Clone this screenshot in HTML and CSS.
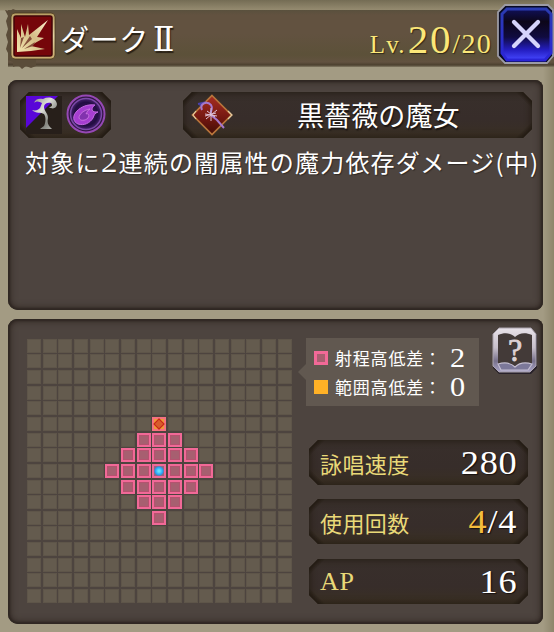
FILE: index.html
```html
<!DOCTYPE html>
<html lang="ja">
<head>
    <meta charset="UTF-8">
    <meta name="viewport" content="width=device-width, initial-scale=1.0">
    <title>ダークⅡ</title>
    <link rel="stylesheet" href="styles.css">
</head>
<body>
    <div class="header">
        <svg class="torn" width="34" height="62" viewBox="0 0 34 62">
            <path d="M34 1H20l-4 1-5-2-3 2-5-1 3 6-2 5 2 8-2 6 2 7-2 7 3 6-1 5 5 2 0 5 5-2 4 4 4-3 5 2 5-2z" fill="#5a4c39"/>
        </svg>
        <svg class="skill-icon" width="46" height="48" viewBox="0 0 46 48">
            <defs>
                <linearGradient id="gold" x1="0" y1="0" x2="0" y2="1">
                    <stop offset="0" stop-color="#b79d62"/>
                    <stop offset=".5" stop-color="#e3d2a0"/>
                    <stop offset="1" stop-color="#c6a86c"/>
                </linearGradient>
                <linearGradient id="claw" x1="0" y1="1" x2="1" y2="0">
                    <stop offset="0" stop-color="#f4e5ae"/>
                    <stop offset=".5" stop-color="#d4bd87"/>
                    <stop offset="1" stop-color="#fff5d0"/>
                </linearGradient>
            </defs>
            <rect x="1" y="1" width="44" height="46" rx="4" fill="url(#gold)" stroke="#4a3820" stroke-width=".8"/>
            <rect x="4" y="4" width="38" height="40" rx="2" fill="#75060a" stroke="#420508" stroke-width="1.500"/>
            <path d="M7 40V17l4 9V12l4 13 3-13 1 11L38 8 27 25l7 1-9 5-4 3 14 3-14 2z" fill="url(#claw)"/>
            <path d="M11 26l-1 10 4-11zM20 24l-8 12 10-9zM25 30l-11 7 9-3z" fill="#86503a"/>
        </svg>
        <h1>ダーク<span class="roman">Ⅱ</span></h1>
        <div class="level"><span class="lv">Lv.</span><span class="now">20</span><span class="max">/20</span></div>
        <svg class="close" width="58" height="64" viewBox="0 0 58 64">
            <defs>
                <linearGradient id="blue" x1="0" y1="0" x2="0" y2="1">
                    <stop offset="0" stop-color="#101058"/>
                    <stop offset=".25" stop-color="#0c0619"/>
                    <stop offset=".55" stop-color="#100b40"/>
                    <stop offset=".8" stop-color="#241dc0"/>
                    <stop offset="1" stop-color="#4547ff"/>
                </linearGradient>
                <linearGradient id="rim" x1="0" y1="0" x2="0" y2="1">
                    <stop offset="0" stop-color="#2a3bb0"/>
                    <stop offset="1" stop-color="#2b25d8"/>
                </linearGradient>
            </defs>
            <path d="M9 2h43l5 5v46l-6 7H9l-7-7V9z" fill="#080a22" stroke="#9c9ba5" stroke-width="1.800"/>
            <path d="M11 6h39l5 5v39l-6 7H11l-5-7V11z" fill="url(#blue)" stroke="url(#rim)" stroke-width="3"/>
            <path d="M18 19l24 24M42 19L18 43" stroke="#d6d4fb" stroke-width="4.300" stroke-linecap="round"/>
        </svg>
    </div>

    <div class="panel description">
        <div class="tags">
            <div class="slot types">
                <svg width="36" height="38" viewBox="0 0 36 38">
                    <defs>
                        <linearGradient id="bone" x1="0" y1="0" x2="1" y2="1">
                            <stop offset="0" stop-color="#8c8c84"/>
                            <stop offset=".4" stop-color="#dedfd9"/>
                            <stop offset=".7" stop-color="#858680"/>
                            <stop offset="1" stop-color="#c9cac5"/>
                        </linearGradient>
                    </defs>
                    <path d="M0 0h36v38H0z" fill="#271f1a"/>
                    <path d="M0 0h32L0 32z" fill="#5906d8"/>
                    <path d="M8 7c1-4 5-5 9-4 6-3 13-1 14 5 0 4-4 6-8 3 3 0 4-2 2-4-4-1-7 1-7 4 0 4 4 6 4 11-1 4 0 7 2 9l2 2h-12l4-3c2-4 2-9 0-12-3-2-8 0-12-4 4 1 6 0 8-2l2-5c-3-2-6-2-8 0z" fill="url(#bone)"/>
                </svg>
                <svg width="40" height="40" viewBox="0 0 40 40">
                    <defs>
                        <radialGradient id="orb">
                            <stop offset="0" stop-color="#4c176f"/>
                            <stop offset=".75" stop-color="#220d42"/>
                            <stop offset="1" stop-color="#47236e"/>
                        </radialGradient>
                    </defs>
                    <circle cx="20" cy="20" r="18.500" fill="#321545" stroke="#9548b4" stroke-width="2"/>
                    <circle cx="20" cy="20" r="15.500" fill="url(#orb)" stroke="#7b49a7" stroke-width="1.500"/>
                    <path d="M29 11c-8-1-14 2-18 6-5 5-4 11 1 13 6 2 12-1 15-6 1-3 2-5 5-6-3 0-5 0-6-2 0-2 1-4 3-5z" fill="#a63ed0" stroke="#c36be0"/>
                    <path d="M24 15c-6 1-11 5-11 9 1 3 6 3 9 0 2-3 0-5-2-4 1-2 2-4 4-5z" fill="#8232ae" stroke="#d07be4" stroke-width=".8"/>
                </svg>
            </div>
            <div class="slot job">
                <svg width="42" height="42" viewBox="0 0 42 42">
                    <defs>
                        <linearGradient id="ruby" x1="0" y1="0" x2="0" y2="1">
                            <stop offset="0" stop-color="#a72d22"/>
                            <stop offset=".6" stop-color="#711710"/>
                            <stop offset="1" stop-color="#420d06"/>
                        </linearGradient>
                    </defs>
                    <path d="M21 1.500L40.500 21 21 40.500 1.500 21z" fill="url(#ruby)" stroke="#b8753b" stroke-width="1.700"/>
                    <path d="M5 17l-3 4 3 4M37 17l4 4-4 4" fill="none" stroke="#e3caa1" stroke-width="1.200"/>
                    <path d="M7 10l5-1-3 3" fill="none" stroke="#4941ae" stroke-width="2"/>
                    <path d="M11 16c-3-7 5-9 9-5 3 4-2 7 0 10l6 5 7 8" fill="none" stroke="#a577cc" stroke-width="2"/>
                    <path d="M14 22l11-3M16 17l8 6M20 14v13M15 25l11-9M14 20l12 2" stroke="#dfc2d6" stroke-width="1"/>
                </svg>
                <h2>黒薔薇の魔女</h2>
            </div>
        </div>
        <p class="effect">対象に<span class="digit">2</span>連続の闇属性の魔力依存ダメージ(中)</p>
    </div>

    <div class="panel range">
        <div class="grid" id="grid"></div>
        <div class="side">
            <div class="top">
                <div class="legend">
                    <div class="row"><i class="key pink"></i><span>射程高低差：</span><b>2</b></div>
                    <div class="row"><i class="key orange"></i><span>範囲高低差：</span><b>0</b></div>
                </div>
                <svg class="help" width="46" height="49" viewBox="0 0 46 49">
                    <defs>
                        <linearGradient id="silver" x1="0" y1="0" x2="0" y2="1">
                            <stop offset="0" stop-color="#e8e2e8"/>
                            <stop offset=".45" stop-color="#c7bfca"/>
                            <stop offset=".75" stop-color="#77708a"/>
                            <stop offset="1" stop-color="#aaa5c9"/>
                        </linearGradient>
                    </defs>
                    <path d="M7 2h33l5 6v33l-6 6H7l-6-6V8z" fill="#29222b"/>
                    <path d="M7 1h32l5 6v32l-6 6H7l-6-6V7z" fill="url(#silver)" stroke="#aaa2ac"/>
                    <path d="M6 8c7-3 13-2 17 2 4-4 10-5 17-2v30c-7-2-13-1-17 3-4-4-10-5-17-3z" fill="#433a38"/>
                    <path d="M6 37c7-2 13-1 17 3 4-4 10-5 17-3l-4 6H9z" fill="#7c7899" stroke="#c4bed1" stroke-width="1.200"/>
                    <text x="23" y="34" text-anchor="middle" class="question">?</text>
                </svg>
            </div>
            <div class="slot stat"><span class="label">詠唱速度</span><span class="value">280</span></div>
            <div class="slot stat"><span class="label">使用回数</span><span class="value"><em>4</em>/4</span></div>
            <div class="slot stat"><span class="label latin">AP</span><span class="value">16</span></div>
        </div>
    </div>
    <script src="script.js"></script>
</body>
</html>
```
FILE: styles.css
```css
* {
    box-sizing: border-box;
}
body {
    margin: 0;
    width: 554px;
    height: 632px;
    padding-top: 10px;
    overflow: hidden;
    color: #fff;
    font-family: "Liberation Serif", "Noto Sans CJK JP", serif;
    background: linear-gradient(to right, transparent 543px, #8d856b 554px),
        linear-gradient(#746c54, #958b70 10px, #a39b83 11px);
}
h1, h2, p {
    margin: 0;
    font-weight: 400;
}
svg {
    display: block;
    flex: none;
}
.header {
    position: relative;
    display: flex;
    height: 57px;
    margin-left: 8px;
    padding-left: 2px;
    background: linear-gradient(#59503d, #625240 5px, #625240 24px, #5c5139 45px, #625240 52px, #4c402f 55px, #847b65);
}
.torn {
    position: absolute;
    left: -6px;
    top: -1px;
}
.skill-icon {
    position: relative;
    margin-top: 2px;
}
h1 {
    margin-left: 4px;
    font: 29px/56px "Noto Sans CJK JP", sans-serif;
    letter-spacing: .6px;
    white-space: nowrap;
    text-shadow: 1px 2px 1px #292116;
}
.roman {
    display: inline-block;
    margin-left: 4px;
    font: 33px/40px "DejaVu Serif", serif;
    transform: scaleX(.95);
    transform-origin: 0 0;
}
.level {
    display: flex;
    align-items: baseline;
    margin-left: auto;
    margin-right: 4px;
    color: #fbe778;
    line-height: 58px;
    text-shadow: 1px 1px 1px #302818;
}
.lv {
    font-size: 25px;
    letter-spacing: 1.2px;
    margin-right: 2px;
}
.now {
    font-size: 41px;
    letter-spacing: 1.8px;
}
.max {
    font-size: 28px;
    letter-spacing: 1.3px;
}
.close {
    position: relative;
    margin-top: -7px;
}
.panel {
    position: relative;
    width: 535px;
    margin-left: 8px;
    background: #4d443f;
    border-radius: 9px 8px 8px 10px;
    box-shadow: inset 0 0 2px 2px #2f2722, inset 0 0 6px 3px #382e29;
}
.description {
    height: 230px;
    margin-top: 13px;
    padding: 12px 0 0 12px;
}
.tags {
    display: flex;
    gap: 72px;
}
.slot {
    height: 46px;
    display: flex;
    align-items: center;
    clip-path: polygon(9px 0, calc(100% - 9px) 0, 100% 9px, 100% calc(100% - 9px), calc(100% - 9px) 100%, 9px 100%, 0 calc(100% - 9px), 0 9px);
    background: linear-gradient(135deg, #241c14 7px, transparent 12px),
        linear-gradient(225deg, #241c14 7px, transparent 12px),
        linear-gradient(45deg, #241c14 7px, transparent 12px),
        linear-gradient(315deg, #241c14 7px, transparent 12px),
        linear-gradient(#382f2b, #372d2a 60%, #392f23);
    box-shadow: inset 0 0 6px 1px #261e15;
}
.types {
    width: 91px;
    gap: 4px;
    padding-left: 6px;
}
.types svg:last-child {
    margin-top: -3px;
}
.job {
    width: 349px;
    padding-left: 8px;
}
h2 {
    margin-left: 64px;
    font: 27px/46px "Noto Sans CJK JP", sans-serif;
    letter-spacing: .1px;
    white-space: nowrap;
    text-shadow: 1px 2px 1px #1c1613;
}
.effect {
    margin: 6px 0 0 5px;
    font: 24px/36px "Noto Sans CJK JP", sans-serif;
    letter-spacing: 1.2px;
    white-space: nowrap;
    text-shadow: 1px 1px 1px #302a26;
}
.digit {
    display: inline-block;
    width: 18px;
    font-family: "Liberation Serif", serif;
    font-size: 30px;
    line-height: 20px;
    transform: scaleX(1.1);
    transform-origin: 0 0;
}
.range {
    display: flex;
    height: 305px;
    margin-top: 9px;
    padding: 19px 0 0 19px;
}
.grid {
    display: grid;
    grid-template-columns: repeat(17, 14px);
    grid-auto-rows: 14px;
    gap: 1.67px;
    width: 265px;
    height: 265px;
    margin-top: .6px;
    flex: none;
}
.cell {
    background: #645b4e;
    border: 1px solid #5e5549;
}
.cell.reach {
    background: #a75f70;
    border: 2px solid #f16997;
    box-shadow: inset 0 0 0 1px #b5526f;
}
.cell.target {
    border: 2px solid #f57180;
    background: #ef9a37;
    display: flex;
    align-items: center;
    justify-content: center;
    box-shadow: none;
}
.cell.target::before {
    content: "";
    width: 6px;
    height: 6px;
    background: #d85c2d;
    border: 1.5px solid #c52415;
    transform: rotate(45deg);
}
.cell.self {
    background: radial-gradient(circle, #64e0ff 1px, #239af0 4px, #8c6884 5px);
    border: 2px solid #f16997;
    box-shadow: none;
}
.side {
    width: 243px;
    padding-left: 17px;
    display: flex;
    flex-direction: column;
}
.top {
    display: flex;
    margin-left: -3px;
    margin-bottom: 35px;
    height: 67px;
}
.legend {
    position: relative;
    flex: none;
    width: 173px;
    height: 68px;
    padding: 6px 0 0 8px;
    background: #615850;
}
.legend::before {
    content: "";
    position: absolute;
    left: -8px;
    top: 26px;
    border: 8px solid transparent;
    border-left: 0;
    border-right-color: #615850;
}
.row {
    display: flex;
    align-items: center;
    height: 28.5px;
    font: 17px/28px "Noto Sans CJK JP", sans-serif;
    letter-spacing: .8px;
    white-space: nowrap;
}
.row span {
    width: 115px;
    margin-left: 7px;
}
.row b {
    font: 28px/28px "Liberation Serif", serif;
    transform: scaleX(1.08);
    transform-origin: 0 0;
}
.key {
    width: 14px;
    height: 14px;
    flex: none;
}
.pink {
    background: #a75f70;
    border: 3px solid #f16997;
}
.orange {
    background: #ffb126;
}
.help {
    margin: -11px 0 0 13px;
}
.question {
    font: 32px "Liberation Serif", serif;
    fill: #ddd2d6;
    stroke: #ddd2d6;
    stroke-width: .8;
}
.stat {
    width: 219px;
    margin-bottom: 14px;
    height: 45px;
    flex: none;
    justify-content: space-between;
    padding: 0 11px;
}
.stat:nth-child(3) {
    margin-bottom: 15px;
}
.label {
    color: #e9d978;
    font: 22px/44px "Noto Sans CJK JP", sans-serif;
    letter-spacing: .4px;
}
.latin {
    font: 26px/48px "Liberation Serif", serif;
    letter-spacing: .8px;
}
.value {
    font-size: 33px;
    line-height: 46px;
    letter-spacing: .6px;
    transform: scaleX(1.1);
    transform-origin: 100% 0;
    text-shadow: 1px 1px 1px #17110f;
}
.value em {
    font-style: normal;
    color: #f4bc3c;
}
```
FILE: script.js
```js
var $grid = document.querySelector('#grid');
var center = 8;
for (var y = 0; y < 17; y++) {
    for (var x = 0; x < 17; x++) {
        var cell = document.createElement('div');
        cell.className = 'cell';
        if (Math.abs(x - center) + Math.abs(y - center) <= 3) {
            cell.className += ' reach';
        }
        if (x === center && y === center) {
            cell.className += ' self';
        }
        if (x === center && y === center - 3) {
            cell.className += ' target';
        }
        $grid.appendChild(cell);
    }
}
```
